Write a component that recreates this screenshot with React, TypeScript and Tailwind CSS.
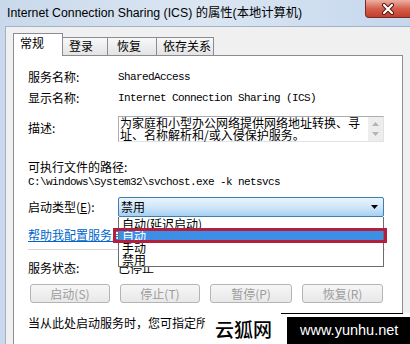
import React from "react";

function Tri({ up = false, color = "#000" }: { up?: boolean; color?: string }) {
  return (
    <svg width="7" height="4" viewBox="0 0 7 4">
      <path d={up ? "M0 4 L3.5 0 L7 4 Z" : "M0 0 L7 0 L3.5 4 Z"} fill={color} />
    </svg>
  );
}

export default function App() {
  return (
    <div className="relative w-[410px] h-[344px] overflow-hidden flex flex-col bg-linear-to-r from-[#c9d9eb] via-[#dbe6f2] to-[#c4d7ed] font-['Noto_Sans_CJK_SC',sans-serif] text-black">
      {/* title bar */}
      <div className="h-[26px] flex items-start shrink-0">
        <div className="pl-[7px] pt-[5px] text-[12.3px] leading-[17px] font-['Liberation_Sans','Noto_Sans_CJK_SC',sans-serif] whitespace-nowrap">
          Internet Connection Sharing (ICS) 的属性(本地计算机)
        </div>
        <div className="ml-auto -mr-[1px] w-[46px] h-[18px] shrink-0 rounded-bl-[4px] border-x border-b border-[#7a2c24] bg-linear-to-b from-[#eab0a2] via-[#d6604f] to-[#c23c2b] flex items-center justify-center">
          <svg width="14" height="12" viewBox="0 0 14 12">
            <path d="M3 2 L11 10 M11 2 L3 10" stroke="#4a1510" strokeWidth="4" strokeLinecap="round" />
            <path d="M3 2 L11 10 M11 2 L3 10" stroke="#ffffff" strokeWidth="2.2" strokeLinecap="round" />
          </svg>
        </div>
      </div>

      {/* client area */}
      <div className="flex-1 ml-[5px] border-l border-t border-[#9fb2c8] bg-[#f0f0f0] flex flex-col min-h-0">
        {/* tabs */}
        <div className="flex items-end pl-[7px] pt-[6px] text-[12px] leading-[16px] shrink-0">
          <div className="relative z-10 w-[50px] h-[23px] -mb-[1px] bg-white border-t border-x border-[#898c95] pl-[6px] pt-[1px]">常规</div>
          <div className="w-[45px] h-[18px] border-t border-r border-[#898c95] bg-linear-to-b from-[#f8f8f8] to-[#e3e3e3] pl-[6px]">登录</div>
          <div className="w-[49px] h-[18px] border-t border-r border-[#898c95] bg-linear-to-b from-[#f8f8f8] to-[#e3e3e3] pl-[9px]">恢复</div>
          <div className="w-[57px] h-[18px] border-t border-r border-[#898c95] bg-linear-to-b from-[#f8f8f8] to-[#e3e3e3] pl-[6px]">依存关系</div>
        </div>

        {/* panel */}
        <div className="flex-1 ml-[7px] w-[390px] bg-white border-t border-x border-[#898c95] pl-[14px] flex flex-col text-[12px] leading-[16px]">
          <div className="mt-[13px] h-[16px] flex">
            <div className="w-[90px] shrink-0">服务名称:</div>
            <div className="font-['Liberation_Mono',monospace] text-[11px] tracking-[-0.6px]">SharedAccess</div>
          </div>
          <div className="mt-[5px] h-[16px] flex">
            <div className="w-[90px] shrink-0">显示名称:</div>
            <div className="font-['Liberation_Mono',monospace] text-[11px] tracking-[-0.6px] whitespace-nowrap">Internet Connection Sharing (ICS)</div>
          </div>
          <div className="mt-[10px] h-[26px] flex">
            <div className="w-[90px] shrink-0 mt-[4px]">描述:</div>
            <div className="w-[266px] h-[26px] flex border border-[#abadb3] border-b-[#dfe3e8] border-r-[#dfe3e8] bg-white">
              <div className="flex-1 pl-[1px] text-[12px] leading-[11.5px] whitespace-nowrap">
                <div>为家庭和小型办公网络提供网络地址转换、寻</div>
                <div>址、名称解析和/或入侵保护服务。</div>
              </div>
              <div className="w-[15px] shrink-0 bg-[#ededed] flex flex-col justify-between items-center py-[5px]">
                <Tri up color="#b4b4b4" />
                <Tri color="#b4b4b4" />
              </div>
            </div>
          </div>
          <div className="mt-[17px] h-[15px] leading-[15px]">可执行文件的路径:</div>
          <div className="h-[16px] font-['Liberation_Mono',monospace] text-[11px] tracking-[-0.6px] whitespace-nowrap">
            C:\windows\System32\svchost.exe -k netsvcs
          </div>
          <div className="mt-[7px] h-[20px] flex items-center">
            <div className="w-[90px] shrink-0">
              启动类型(<span className="underline">E</span>):
            </div>
            <div className="relative w-[266px] h-[20px] border border-[#3c7fb1] rounded-[2px] bg-linear-to-b from-[#eaf4fc] via-[#d0e6f8] to-[#a6d0f2] flex items-center pl-[2px]">
              <span>禁用</span>
              <span className="ml-auto mr-[5px] flex">
                <Tri />
              </span>
              {/* dropdown list */}
              <div className="absolute z-20 top-[19px] -left-[1px] w-[266px] h-[50px] bg-white border-x border-b border-[#6d6d6d] pt-[1px] text-[12px] leading-[12px]">
                <div className="h-[12px] pl-[3px] whitespace-nowrap">自动(延迟启动)</div>
                <div className="relative h-[12px] pl-[3px] bg-[#3d8fe6] text-white">
                  自动
                  <div className="absolute -top-[2px] -bottom-[1px] -left-[6px] -right-[4px] border-[3px] border-[#b31f3c]" />
                </div>
                <div className="h-[12px] pl-[3px]">手动</div>
                <div className="h-[12px] pl-[3px]">禁用</div>
              </div>
            </div>
          </div>
          <div className="mt-[10px] h-[16px] text-[#0066cc] underline whitespace-nowrap">帮助我配置服务启动选项。</div>
          <div className="mt-[6px] h-px bg-[#d5d5d5] mr-[17px]" />
          <div className="mt-[10px] h-[16px] flex">
            <div className="w-[90px] shrink-0">服务状态:</div>
            <div>已停止</div>
          </div>
          <div className="mt-[8px] ml-[2px] flex gap-[10px] text-[#9c9c9c]">
            <div className="w-[80px] h-[19px] rounded-[3px] border border-[#b4b4b4] bg-linear-to-b from-[#f6f6f6] to-[#e8e8e8] flex items-center justify-center">启动(S)</div>
            <div className="w-[80px] h-[19px] rounded-[3px] border border-[#b4b4b4] bg-linear-to-b from-[#f6f6f6] to-[#e8e8e8] flex items-center justify-center">停止(T)</div>
            <div className="w-[82px] h-[19px] rounded-[3px] border border-[#b4b4b4] bg-linear-to-b from-[#f6f6f6] to-[#e8e8e8] flex items-center justify-center">暂停(P)</div>
            <div className="w-[81px] h-[19px] rounded-[3px] border border-[#b4b4b4] bg-linear-to-b from-[#f6f6f6] to-[#e8e8e8] flex items-center justify-center">恢复(R)</div>
          </div>
          <div className="mt-[12px] h-[16px] whitespace-nowrap">当从此处启动服务时，您可指定所适用的启动参数。</div>
        </div>
      </div>

      {/* watermark */}
      <div className="absolute z-30 left-[205px] top-[313px] right-0 bottom-0 bg-white flex">
        <div className="w-[76px] shrink-0 flex items-center pl-[10px] text-[19px] leading-[20px] font-medium font-['Noto_Sans_CJK_SC',sans-serif]">云狐网</div>
        <div className="flex-1 flex flex-col">
          <div className="h-px w-[122px] bg-black" />
          <div className="mt-[3px] ml-[6px] flex-1 bg-black text-white flex items-center pl-[13px] text-[14.5px] leading-none font-['Liberation_Sans',sans-serif]">
            www.yunhu.net
          </div>
        </div>
      </div>
    </div>
  );
}
